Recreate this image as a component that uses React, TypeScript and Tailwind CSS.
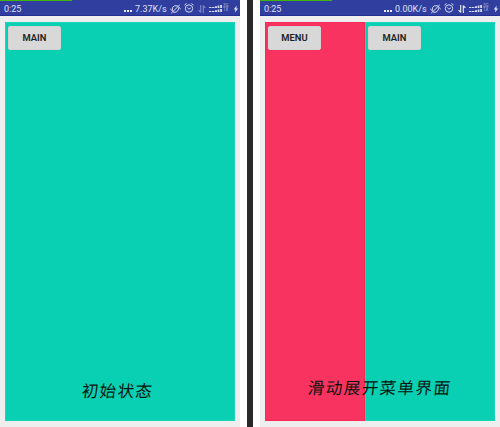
import React from "react";

function MuteIcon() {
  return (
    <svg className="mt-px ml-[4px] h-[10px] w-[11px] shrink-0" viewBox="0 0 11 10" fill="none" stroke="#d3d8f2" strokeWidth="1">
      <path d="M2.6 3.4 4.4 1.8h3.2L8.9 3.6 8 6.4 6 8.2H3.4L2.2 6.2z" />
      <path d="M1.2 9.2 9.8.8" />
      <path d="M.4 4.6 1.6 6.6M9.4 3.4l1.2 2" strokeWidth=".9" />
    </svg>
  );
}

function AlarmIcon() {
  return (
    <svg className="ml-[3px] h-[10px] w-[10px] shrink-0" viewBox="0 0 10 10" fill="none" stroke="#d3d8f2">
      <circle cx="5" cy="5.5" r="3.7" />
      <path d="M.5 2.1 2.6.5M7.4.5l2.1 1.6M3.3 4.6l1.6 1.5 2-1.2" />
    </svg>
  );
}

function DataArrows({ active }: { active: boolean }) {
  return (
    <svg className="mt-px ml-[4px] h-[8px] w-[8px] shrink-0" viewBox="0 0 8 8" fill="none" stroke={active ? "#eef0fb" : "#7f89cb"} strokeWidth="1.1">
      <path d="M2.7 0v7.4M.6 5.1l2.1 2.3M5.3 8V.6M7.4 2.9 5.3.6" />
    </svg>
  );
}

function SignalIcon() {
  return (
    <svg className="mt-[2px] ml-[3px] h-[8px] w-[13px] shrink-0" viewBox="0 0 13 8" fill="#d5daf4">
      <path d="M0 2h2.4v1H0zM3 2h2.4v1H3zM6 1.2h2v1.8H6zM8.7.6h1.7V3H8.7zM11.2 0H13v3h-1.8z" />
      <path d="M0 6h2.4v1H0zM3 6h2.4v1H3zM6 5.2h2V7H6zM8.7 4.6h1.7V7H8.7zM11.2 4H13v3h-1.8z" />
    </svg>
  );
}

function BoltIcon() {
  return (
    <svg className="mt-px ml-[3px] h-[8px] w-[6px] shrink-0" viewBox="0 0 6 8" fill="#e6e9fa">
      <path d="M3.7.4.8 4.4h1.7L2 7.6l3.1-4.1H3.3z" />
    </svg>
  );
}

function StatusBar({ speed, active }: { speed: string; active: boolean }) {
  return (
    <header className="h-4 border-b border-[#232e94] bg-[#303f9f] text-[#dce0f5]">
      <div className="h-px w-[72px] bg-[#3fb50c]" />
      <div className="flex h-[14px] items-center pl-1">
        <span className="w-[120px] pt-[2px] text-[9px] leading-none">0:25</span>
        <span className="flex w-[9px] gap-px pt-[6px]">
          <i className="size-[2px] bg-[#e8ebfa]" />
          <i className="size-[2px] bg-[#e8ebfa]" />
          <i className="size-[2px] bg-[#e8ebfa]" />
        </span>
        <span className="ml-[2px] w-[31px] whitespace-nowrap pt-[2px] text-[9px] leading-none">{speed}</span>
        <MuteIcon />
        <AlarmIcon />
        <DataArrows active={active} />
        <SignalIcon />
        <span className="ml-px w-[7px] text-[4.5px] leading-[4px] text-[#a9b1de]">
          3G
          <br />
          1X
        </span>
        <BoltIcon />
      </div>
    </header>
  );
}

function Button({ children }: { children: string }) {
  return (
    <button className="mt-[3px] ml-[3px] flex h-6 w-[53px] items-center justify-center rounded-[2px] border border-[#d3d3d3] bg-[#d8d8d8] text-[9.4px] font-semibold leading-none text-[#202020]">
      {children}
    </button>
  );
}

function Caption({ children, className }: { children: string; className: string }) {
  return (
    <p
      lang="zh-CN"
      className={`absolute -skew-x-6 whitespace-nowrap font-['Noto_Sans_CJK_SC',sans-serif] leading-none text-[#07140f] ${className}`}
    >
      {children}
    </p>
  );
}

export default function App() {
  return (
    <div className="flex h-[427px] w-[500px] overflow-hidden bg-white font-[Roboto,sans-serif]">
      <section className="relative w-[240px] bg-[#eeeeee]">
        <StatusBar speed="7.37K/s" active={false} />
        <div className="mx-[5px] mt-[6px] h-[399px] w-[230px] border border-[#1ad5b7] bg-[#09d0b2]">
          <div className="-mt-px -ml-px pt-px">
            <Button>MAIN</Button>
          </div>
        </div>
        <Caption className="top-[382px] left-[82px] text-[16.5px] tracking-[1.3px]">初始状态</Caption>
      </section>
      <div className="mx-[7px] w-[6px] bg-[#292929]" />
      <section className="relative w-[240px] bg-[#eeeeee]">
        <StatusBar speed="0.00K/s" active />
        <div className="mx-[5px] mt-[6px] flex h-[399px] w-[230px]">
          <div className="w-[100px] border border-[#fa2856] bg-[#f83360]">
            <div className="-mt-px -ml-px pt-px">
              <Button>MENU</Button>
            </div>
          </div>
          <div className="w-[130px] border border-[#1ad5b7] bg-[#09d0b2]">
            <div className="-mt-px -ml-px pt-px">
              <Button>MAIN</Button>
            </div>
          </div>
        </div>
        <Caption className="top-[379px] left-[48px] text-[16.5px] tracking-[1.45px]">滑动展开菜单界面</Caption>
      </section>
    </div>
  );
}
